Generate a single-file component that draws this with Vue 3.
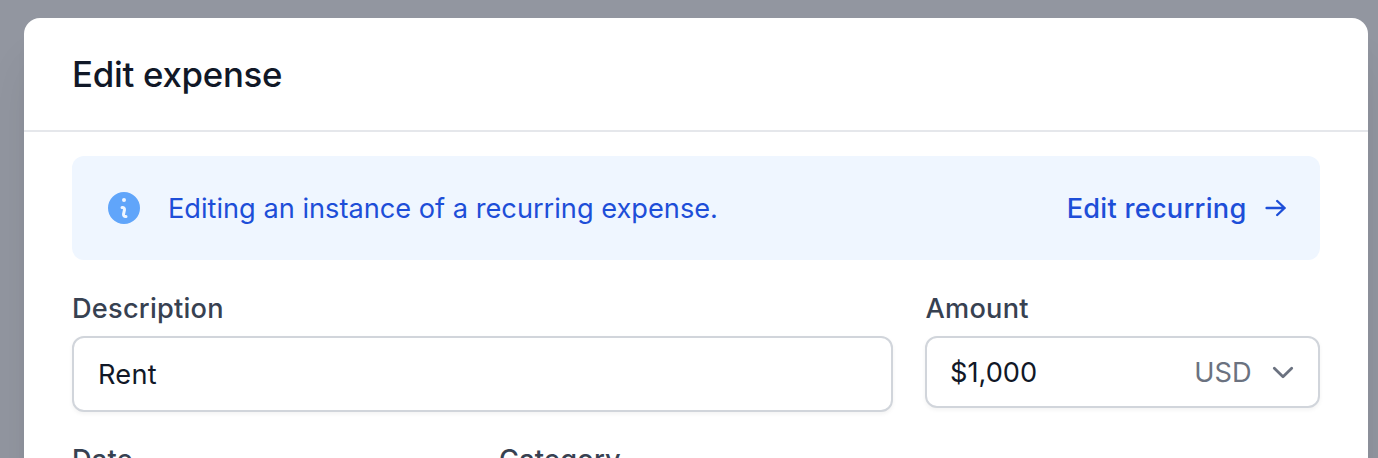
<script setup>
const nextFields = ['Date', 'Category']
</script>

<template>
  <div class="overlay">
    <section class="modal">
      <header class="header">
        <h1 class="title">Edit expense</h1>
      </header>
      <div class="body">
        <div class="notice">
          <svg class="info" viewBox="0 0 20 20" fill="currentColor">
            <path fill-rule="evenodd" clip-rule="evenodd" d="M18 10a8 8 0 11-16 0 8 8 0 0116 0zm-7-4a1 1 0 11-2 0 1 1 0 012 0zM9 9a.75.75 0 000 1.5h.253a.25.25 0 01.244.304l-.459 2.066A1.75 1.75 0 0010.747 15H11a.75.75 0 000-1.5h-.253a.25.25 0 01-.244-.304l.459-2.066A1.75 1.75 0 009.253 9H9z" />
          </svg>
          <span class="message">Editing an instance of a recurring expense.</span>
          <a class="action">
            <span class="action-text">Edit recurring</span>
            <svg class="arrow" viewBox="0 0 24 20" fill="none" stroke="currentColor" stroke-width="2.4" stroke-linecap="round" stroke-linejoin="round">
              <path d="M2.6 10H20.6M13.2 3L20.6 10L13.2 17" />
            </svg>
          </a>
        </div>
        <div class="row">
          <div class="field">
            <label class="label">Description</label>
            <div class="input"><span class="value">Rent</span></div>
          </div>
          <div class="field">
            <label class="label amount">Amount</label>
            <div class="input money">
              <span>$1,000</span>
              <span class="currency">USD</span>
              <svg class="chevron" viewBox="0 0 24 16" fill="none" stroke="currentColor" stroke-width="2.8" stroke-linecap="round" stroke-linejoin="round">
                <path d="M3.3 3.2L12 11.8L20.7 3.2" />
              </svg>
            </div>
          </div>
        </div>
        <div class="next">
          <label v-for="name in nextFields" :key="name" class="label">{{ name }}</label>
        </div>
      </div>
    </section>
  </div>
</template>

<style>
body {
  margin: 0;
  overflow: hidden;
}
</style>

<style scoped>
* {
  box-sizing: border-box;
}
.overlay {
  height: 458px;
  padding: 18px 10px 0 24px;
  overflow: hidden;
  background: #9296a0;
  font-family: Inter, "Liberation Sans", sans-serif;
  font-size: 27.2px;
  line-height: 40px;
}
.modal {
  height: 700px;
  border-radius: 16px;
  background: #fff;
  box-shadow: 0 40px 50px -10px rgba(0, 0, 0, 0.1), 0 16px 20px -12px rgba(0, 0, 0, 0.1);
}
.header {
  height: 114px;
  padding: 32px 48px 0;
  border-bottom: 2px solid #e5e7eb;
}
.title {
  margin: 0;
  font-size: 34.8px;
  font-weight: 500;
  line-height: 48px;
  letter-spacing: -0.28px;
  color: #111827;
  white-space: nowrap;
}
.body {
  padding: 24px 48px 0;
}
.notice {
  display: flex;
  align-items: center;
  height: 104px;
  padding: 0 32px;
  border-radius: 12px;
  background: #eff6ff;
  color: #1d4ed8;
}
.info {
  width: 40px;
  height: 40px;
  color: #60a5fa;
}
.message {
  margin-left: 24px;
  padding-top: 2px;
  white-space: nowrap;
}
.action {
  display: flex;
  align-items: center;
  margin-left: auto;
  font-weight: 500;
  letter-spacing: 0.25px;
}
.action-text {
  padding-top: 2px;
}
.arrow {
  width: 24px;
  height: 20px;
  margin-left: 17.5px;
}
.row {
  display: grid;
  grid-template-columns: 821px 395px;
  gap: 32px;
  margin-top: 29px;
}
.label {
  display: block;
  font-weight: 500;
  letter-spacing: 0.22px;
  color: #374151;
}
.amount {
  padding-left: 0.6px;
}
.input {
  display: flex;
  align-items: center;
  height: 76px;
  margin-top: 7px;
  padding: 1px 24px 0;
  border: 2px solid #d1d5db;
  border-radius: 12px;
  background: #fff;
  color: #111827;
  box-shadow: 0 2px 4px rgba(0, 0, 0, 0.05);
}
.value {
  letter-spacing: 0.25px;
}
.money {
  height: 72px;
  padding-left: 23px;
}
.currency {
  margin-left: auto;
  color: #6b7280;
}
.chevron {
  width: 24px;
  height: 16px;
  margin: 0 -1px 0 19.5px;
  color: #6b7280;
}
.next {
  display: grid;
  grid-template-columns: 395px 395px;
  gap: 32px;
  margin-top: 28px;
}
</style>
